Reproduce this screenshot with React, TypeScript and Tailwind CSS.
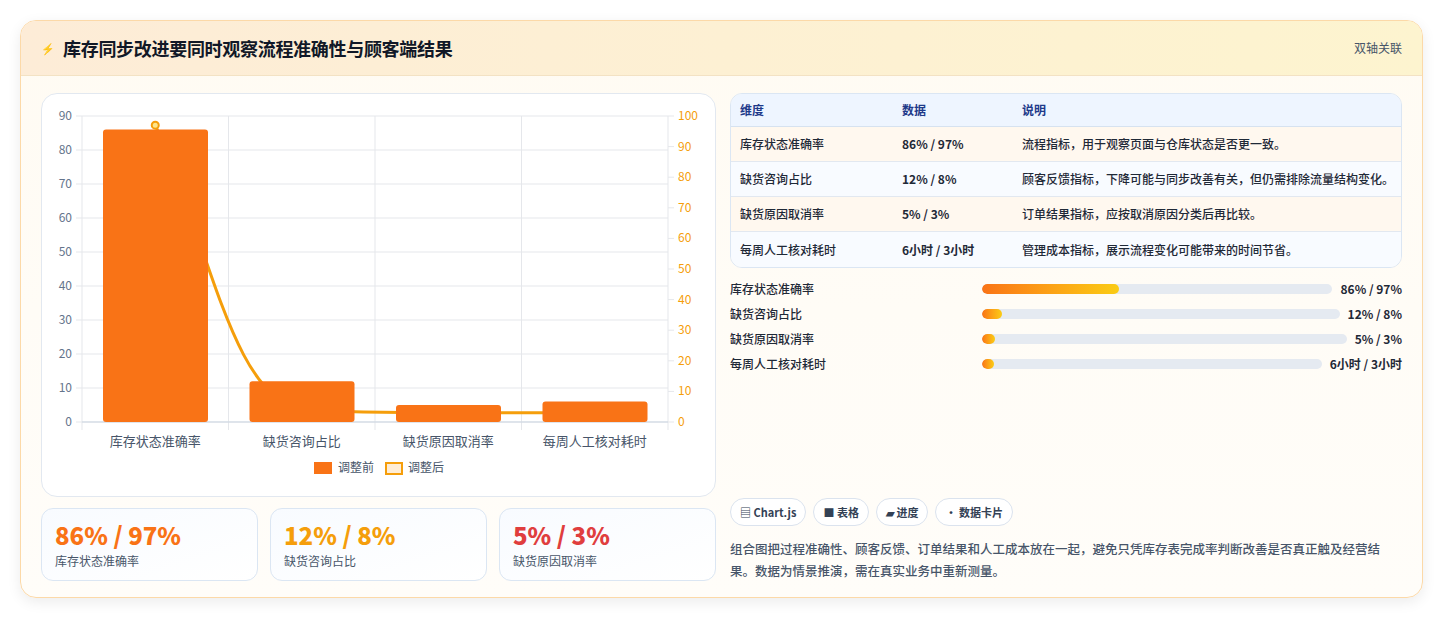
import React from "react";

const f = { fontFamily: '"Noto Sans CJK SC", "Noto Sans", sans-serif' };

const rows = [
  ["库存状态准确率", "86% / 97%", "流程指标，用于观察页面与仓库状态是否更一致。"],
  ["缺货咨询占比", "12% / 8%", "顾客反馈指标，下降可能与同步改善有关，但仍需排除流量结构变化。"],
  ["缺货原因取消率", "5% / 3%", "订单结果指标，应按取消原因分类后再比较。"],
  ["每周人工核对耗时", "6小时 / 3小时", "管理成本指标，展示流程变化可能带来的时间节省。"],
];
const bars = [
  ["库存状态准确率", "86% / 97%", 39],
  ["缺货咨询占比", "12% / 8%", 5.5],
  ["缺货原因取消率", "5% / 3%", 3.5],
  ["每周人工核对耗时", "6小时 / 3小时", 3.5],
];

function Chart() {
  const x0 = 40, x1 = 626, y0 = 22, y1 = 328;
  const cw = (x1 - x0) / 4;
  const before = [86, 12, 5, 6];
  const after = [97, 8, 3, 3];
  const yl = (v: number) => y1 - (v / 90) * (y1 - y0);
  const yr = (v: number) => y1 - (v / 100) * (y1 - y0);
  const cats = ["库存状态准确率", "缺货咨询占比", "缺货原因取消率", "每周人工核对耗时"];
  const pts = after.map((v, i) => [x0 + cw * (i + 0.5), yr(v)]);
  const d = `M${pts[0][0]},${pts[0][1]} C${pts[0][0] + 55},${pts[0][1] + 120} ${pts[1][0] - 70},${pts[1][1]} ${pts[1][0]},${pts[1][1] + 12} C${pts[1][0] + 50},${pts[2][1]} ${pts[2][0] - 50},${pts[2][1]} ${pts[2][0]},${pts[2][1]} L${pts[3][0]},${pts[3][1]}`;
  return (
    <svg width="674" height="400" className="block" style={f}>
      {[0, 10, 20, 30, 40, 50, 60, 70, 80, 90].map((v) => (
        <g key={v}>
          <line x1={x0} x2={x1} y1={yl(v)} y2={yl(v)} stroke="#e5e7eb" />
          <line x1={x0 - 6} x2={x0} y1={yl(v)} y2={yl(v)} stroke="#e5e7eb" />
          <text x={x0 - 10} y={yl(v) + 4} textAnchor="end" fontSize="12" fill="#64748b">{v}</text>
        </g>
      ))}
      {[0, 10, 20, 30, 40, 50, 60, 70, 80, 90, 100].map((v) => (
        <g key={v}>
          <line x1={x1} x2={x1 + 6} y1={yr(v)} y2={yr(v)} stroke="#e5e7eb" />
          <text x={x1 + 10} y={yr(v) + 4} fontSize="12" fill="#f59e0b">{v}</text>
        </g>
      ))}
      {[0, 1, 2, 3, 4].map((i) => (
        <line key={i} x1={x0 + cw * i} x2={x0 + cw * i} y1={y0} y2={y1 + 8} stroke="#e5e7eb" />
      ))}
      <line x1={x0} x2={x1} y1={y1} y2={y1} stroke="#cbd5e1" />
      <path d={d} fill="none" stroke="#f59e0b" strokeWidth="3" />
      {before.map((v, i) => (
        <rect key={i} x={x0 + cw * i + 21} y={yl(v)} width={105} height={y1 - yl(v)} rx="3" fill="#f97316" />
      ))}
      <circle cx={pts[0][0]} cy={pts[0][1]} r="3.5" fill="#fde68a" stroke="#f59e0b" strokeWidth="2" />
      {cats.map((c, i) => (
        <text key={c} x={x0 + cw * (i + 0.5)} y={352} textAnchor="middle" fontSize="13" fill="#475569">{c}</text>
      ))}
      <rect x="272" y="368" width="18" height="12" fill="#f97316" />
      <text x="296" y="378" fontSize="12" fill="#475569">调整前</text>
      <rect x="344" y="369" width="16" height="11" fill="#ffedd5" stroke="#f59e0b" strokeWidth="2" />
      <text x="366" y="378" fontSize="12" fill="#475569">调整后</text>
    </svg>
  );
}

export default function App() {
  return (
    <div className="w-[1444px] h-[620px] bg-white pt-5 px-5" style={f}>
      <div className="w-[1403px] h-[578px] rounded-2xl border border-[#fcd9a8] bg-gradient-to-b from-[#fffbf3] to-[#fffdf9] shadow-[0_4px_14px_rgba(0,0,0,0.08)] overflow-hidden">
        <div className="h-[55px] flex items-center justify-between px-5 bg-gradient-to-r from-[#fdecd7] to-[#fdf4cf] border-b border-[#f3e2c4]">
          <div className="flex items-center gap-2">
            <span className="text-[11px] text-[#4f6bd8]">⚡</span>
            <span className="text-[18px] font-bold text-[#111827] tracking-[-0.3px]">库存同步改进要同时观察流程准确性与顾客端结果</span>
          </div>
          <span className="text-[12px] text-[#475569]">双轴关联</span>
        </div>
        <div className="flex gap-[14px] px-5 pt-[17px] h-[522px]">
          <div className="w-[675px] flex flex-col gap-[11px]">
            <div className="h-[404px] rounded-2xl border border-[#e2e8f0] bg-white">
              <Chart />
            </div>
            <div className="grid grid-cols-3 gap-3">
              {[
                ["86% / 97%", "库存状态准确率", "text-[#f97316]"],
                ["12% / 8%", "缺货咨询占比", "text-[#f59e0b]"],
                ["5% / 3%", "缺货原因取消率", "text-[#e03e3e]"],
              ].map(([v, l, c]) => (
                <div key={l} className="h-[73px] rounded-xl border border-[#dbe6f3] bg-gradient-to-br from-[#f8fbff] to-white px-[13px] pt-[11px]">
                  <div className={`text-[24px] font-extrabold leading-[30px] ${c}`}>{v}</div>
                  <div className="text-[12px] text-[#475569] mt-[2px]">{l}</div>
                </div>
              ))}
            </div>
          </div>
          <div className="flex-1 flex flex-col">
            <div className="rounded-xl border border-[#dbe6f3] overflow-hidden text-[12px]">
              <div className="h-[33px] flex items-center bg-[#eef5ff] font-bold text-[#1e3a8a] border-b border-[#d6e2f0]">
                <div className="w-[171px] pl-[9px]">维度</div>
                <div className="w-[120px]">数据</div>
                <div className="flex-1">说明</div>
              </div>
              {rows.map((r, i) => (
                <div key={r[0]} className={`h-[35px] flex items-center text-[#1f2937] font-medium ${i % 2 === 0 ? "bg-[#fff8ef]" : "bg-[#f8fbff]"} ${i < 3 ? "border-b border-[#e2e8f0]" : ""}`}>
                  <div className="w-[171px] pl-[9px]">{r[0]}</div>
                  <div className="w-[120px] font-semibold">{r[1]}</div>
                  <div className="flex-1">{r[2]}</div>
                </div>
              ))}
            </div>
            <div className="mt-[11px] flex flex-col gap-[6px] text-[12px] text-[#1f2937] font-medium">
              {bars.map(([l, v, w]) => (
                <div key={l as string} className="h-[19px] flex items-center gap-2">
                  <div className="w-[244px] shrink-0">{l}</div>
                  <div className="flex-1 h-[10px] rounded-full bg-[#e5eaf1] overflow-hidden">
                    <div className="h-full rounded-full bg-gradient-to-r from-[#f97316] to-[#facc15]" style={{ width: `${w}%` }} />
                  </div>
                  <div className="font-bold shrink-0">{v}</div>
                </div>
              ))}
            </div>
            <div className="mt-auto flex gap-[7px] text-[11px] font-bold text-[#334155]">
              {["▤ Chart.js", "■ 表格", "▰ 进度", "• 数据卡片"].map((t) => (
                <div key={t} className="h-[28px] px-[9px] rounded-full border border-[#dbe3ee] bg-white flex items-center">{t}</div>
              ))}
            </div>
            <div className="mt-[12px] mb-[16px] text-[12.5px] leading-[22px] text-[#475569] font-medium">
              组合图把过程准确性、顾客反馈、订单结果和人工成本放在一起，避免只凭库存表完成率判断改善是否真正触及经营结果。数据为情景推演，需在真实业务中重新测量。
            </div>
          </div>
        </div>
      </div>
    </div>
  );
}
